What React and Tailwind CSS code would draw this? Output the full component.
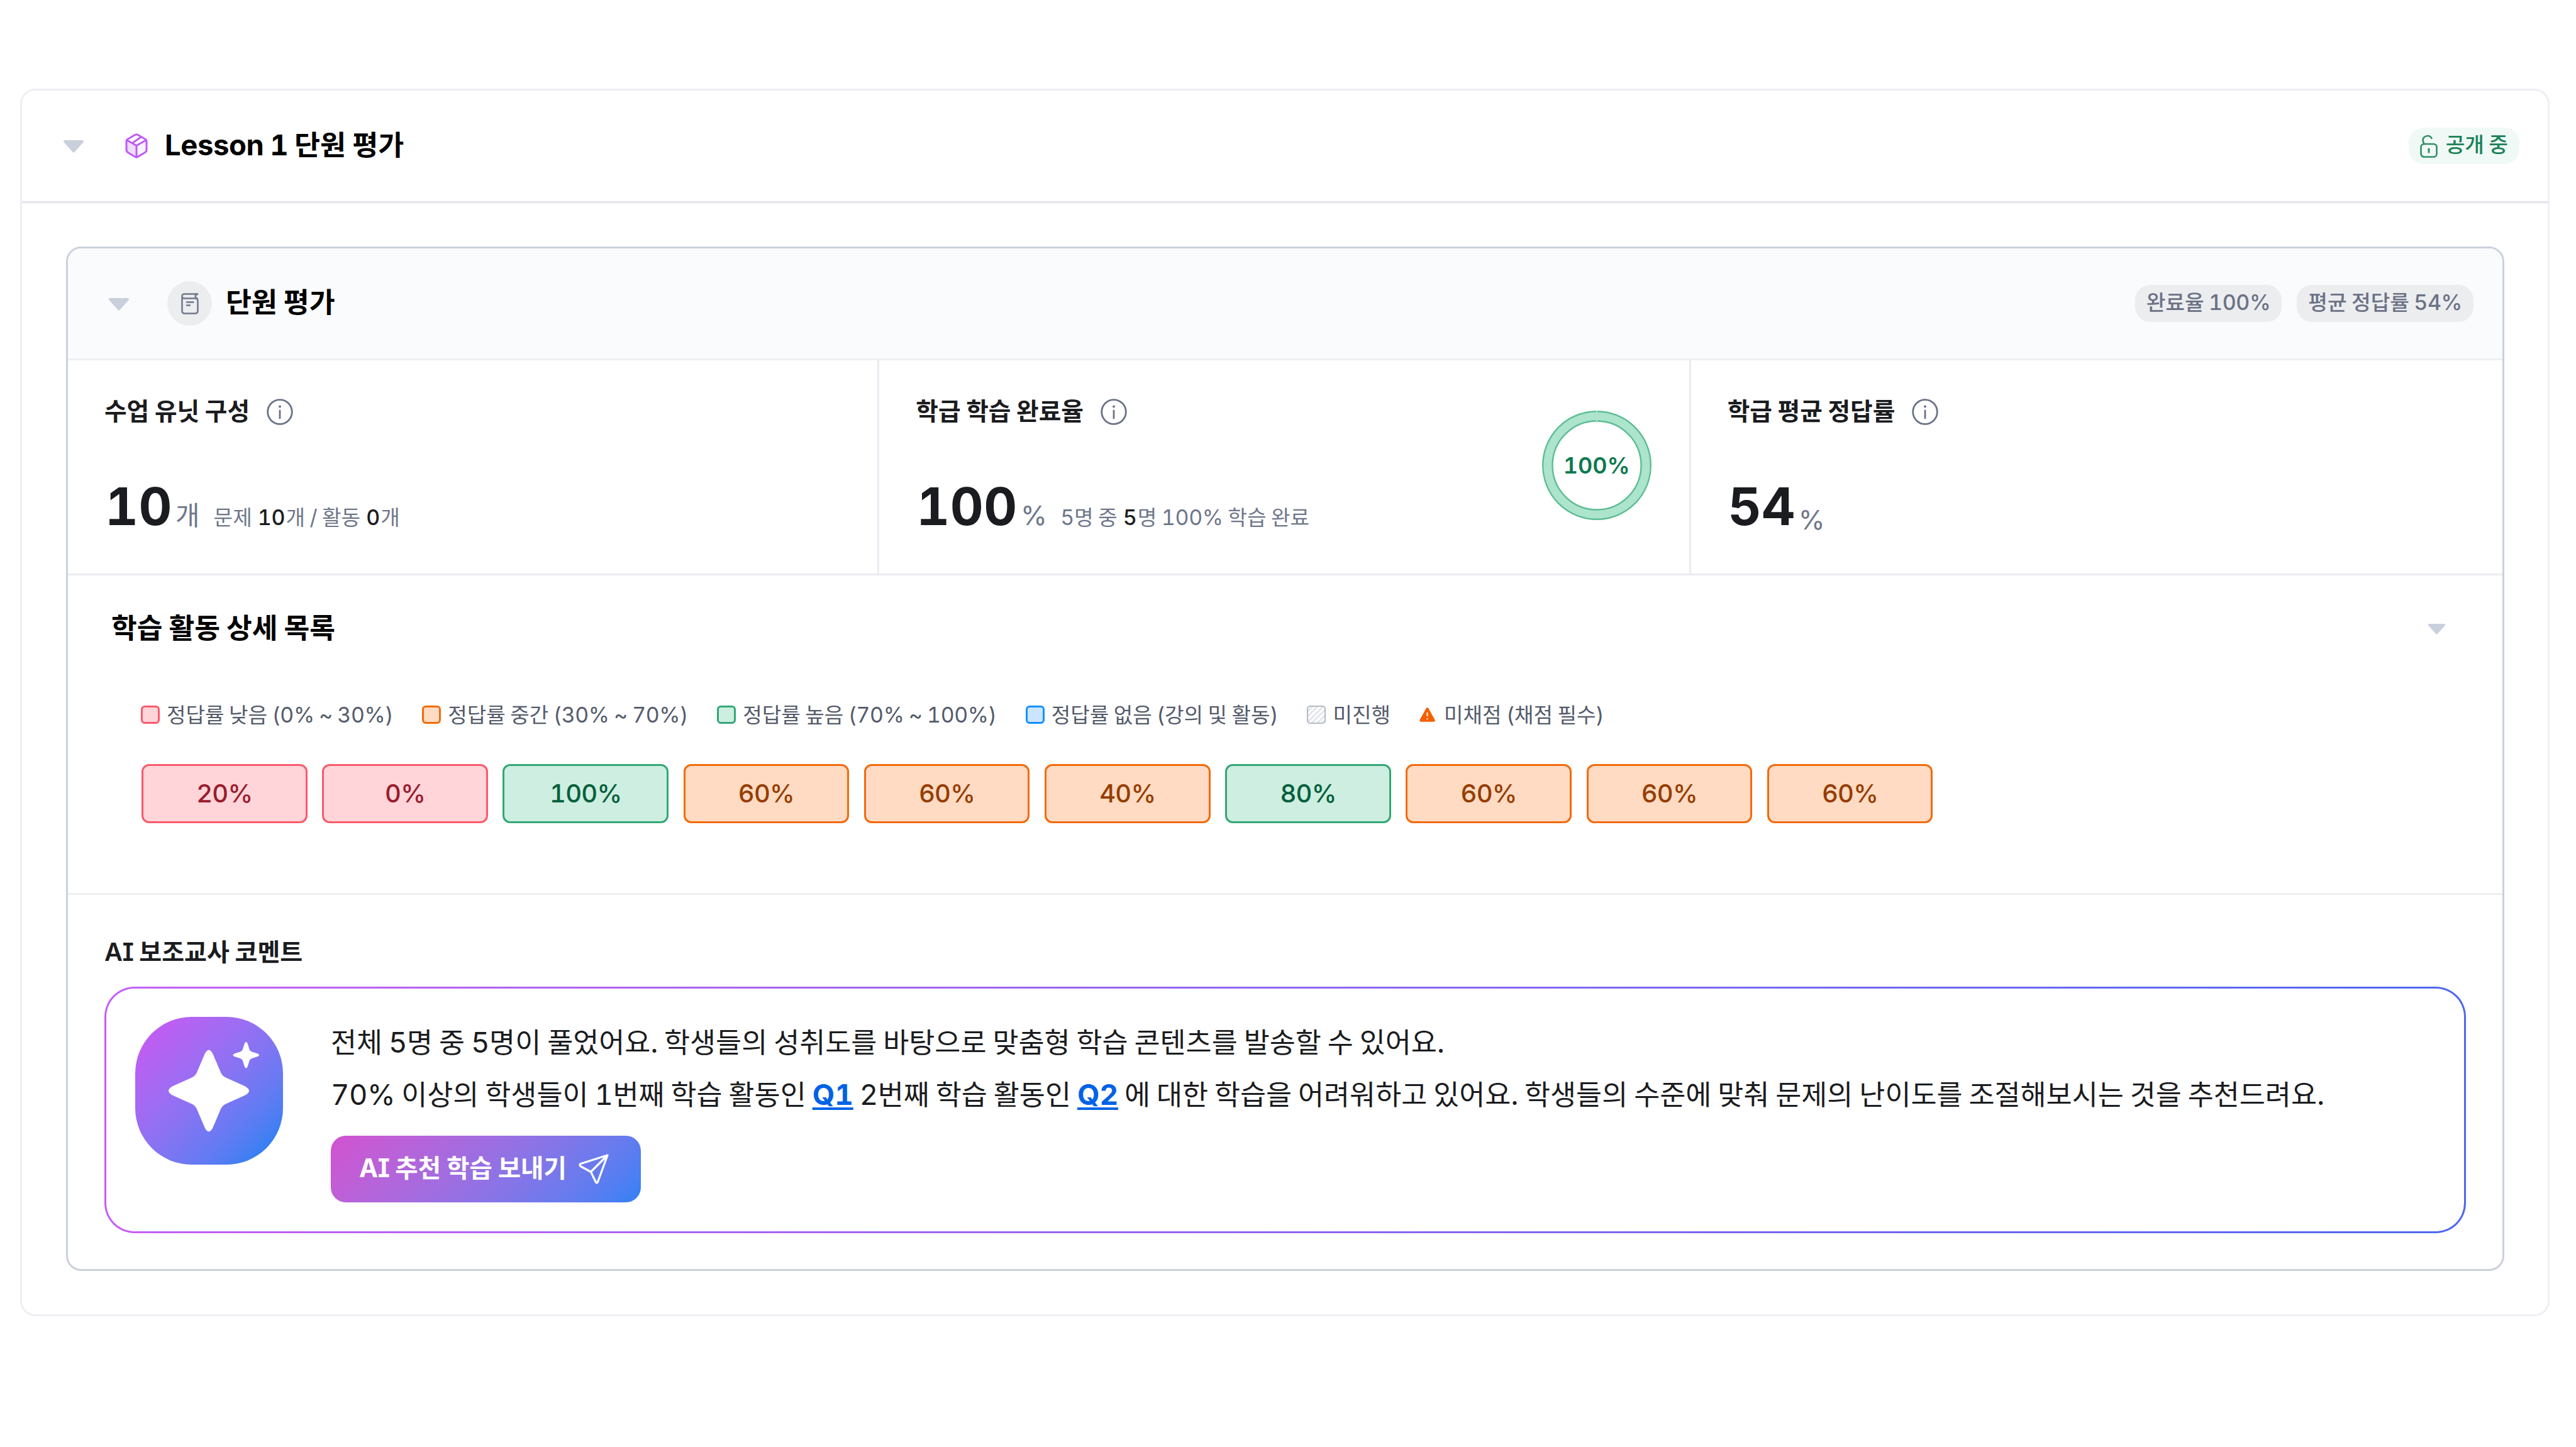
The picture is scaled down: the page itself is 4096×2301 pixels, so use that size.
import { Fragment } from "react";

const TONES = {
  low: "bg-[#ffd5da] border-[#fb5a6b] text-[#9b1c2c]",
  mid: "bg-[#ffdbc4] border-[#f36a0a] text-[#963d00]",
  high: "bg-[#cdeee0] border-[#33a776] text-[#065f3c]",
  none: "bg-[#cce5ff] border-[#1490ff]",
};

const LEGEND = [
  { tone: "low", label: "정답률 낮음 (0% ~ 30%)" },
  { tone: "mid", label: "정답률 중간 (30% ~ 70%)" },
  { tone: "high", label: "정답률 높음 (70% ~ 100%)" },
  { tone: "none", label: "정답률 없음 (강의 및 활동)" },
];

const SCORES = [20, 0, 100, 60, 60, 40, 80, 60, 60, 60];

function toneOf(score) {
  if (score < 30) return "low";
  if (score < 70) return "mid";
  return "high";
}

// Evens out the size and spacing of Hangul and the Latin text next to it
function Ko({ children }) {
  return (
    <span className="text-[0.97em] tracking-[-0.01em] [word-spacing:-0.04em]">
      {children.split(/([가-힣]+)/).map((part, i) =>
        i % 2 ? (
          <span key={i} className="text-[0.981em] tracking-normal">
            {part}
          </span>
        ) : (
          <Fragment key={i}>{part}</Fragment>
        )
      )}
    </span>
  );
}

function Caret({ className }) {
  return (
    <svg viewBox="0 0 34 20" className={className}>
      <path d="M3 2h28L17 17.5z" fill="#c9cfdb" stroke="#c9cfdb" strokeWidth="4" strokeLinejoin="round" />
    </svg>
  );
}

function CubeIcon() {
  return (
    <svg viewBox="0 0 36 40" className="h-[40px] w-[36px]" fill="none" stroke="#bf5af8" strokeWidth="3" strokeLinejoin="round" strokeLinecap="round">
      <path d="M3 11 18 19.5V38L5 30.5Q2 29 2 26V13z" fill="#efdcff" stroke="none" />
      <path d="M33 11 18 19.5V38l13-7.5Q34 29 34 26V13z" fill="#f9f2ff" stroke="none" />
      <path d="M16 2.3Q18 1.3 20 2.3L31.5 9Q34 10.5 34 13V26.5Q34 29 31.5 30.5L20 37.5Q18 38.5 16 37.5L4.5 30.5Q2 29 2 26.5V13Q2 10.5 4.5 9z" />
      <path d="M3 11 18 19.5 33 11M18 19.5V38M11.5 15.5 25 6" />
    </svg>
  );
}

function BookIcon() {
  return (
    <svg viewBox="0 0 28 34" className="h-[34px] w-[28px]" fill="none" stroke="#6f788c" strokeWidth="2.5" strokeLinejoin="round" strokeLinecap="round">
      <path d="M26 1.5H5.5Q1.5 1.5 1.5 5V28Q1.5 32.5 6 32.5H22Q26.5 32.5 26.5 28V12Q26.5 8.5 23 8.5H5Q1.5 8.5 1.5 5" />
      <path d="M26 1.5Q22.5 3 22.5 5T25.5 8.8M9 14.5H19.5M9 19.5H14" />
    </svg>
  );
}

function UnlockIcon() {
  return (
    <svg viewBox="0 0 28 37" className="h-[37px] w-[28px]" fill="none" stroke="#2f8f67" strokeWidth="2.6" strokeLinecap="round">
      <rect x="1.5" y="15" width="25" height="20.5" rx="5" />
      <path d="M6.5 15Q4.5 11.5 4.5 8.5A7.5 7.5 0 0 1 18.5 6" />
      <path d="M14 23.5V28" strokeWidth="3" />
      <circle cx="14" cy="23" r="1.6" fill="#2f8f67" stroke="none" />
    </svg>
  );
}

function InfoIcon() {
  return (
    <svg viewBox="0 0 42 42" className="h-[42px] w-[42px]" fill="none" stroke="#6a7286" strokeWidth="2.8" strokeLinecap="round">
      <circle cx="21" cy="21" r="19.3" />
      <path d="M21 19V31" />
      <circle cx="21" cy="12.5" r="2" fill="#6a7286" stroke="none" />
    </svg>
  );
}

function SendIcon() {
  return (
    <svg viewBox="0 0 48 48" className="h-[48px] w-[48px]" fill="none" stroke="#fff" strokeWidth="3.2" strokeLinejoin="round">
      <path d="M46 2 3.5 15.5Q0.8 17 3 19.5L19.5 28.5 27.5 45Q29 47 30.5 44.5zM19.5 28.5 46 2" />
    </svg>
  );
}

function SparkleLogo() {
  return (
    <div className="h-[235px] w-[235px] shrink-0 rounded-[90px] bg-linear-135 from-[#c758f2] from-5% to-[#3080f3] to-90%">
      <svg viewBox="0 0 235 235" className="h-full w-full" fill="#fff">
        <path d="M110.5 59Q117 46 123.5 59L135 86Q137.5 94 145 97L174 110Q188 117.5 174 125L145 138Q137.5 141 135 149L123.5 176Q117 189 110.5 176L99 149Q96.5 141 89 138L60 125Q46 117.5 60 110L89 97Q96.5 94 99 86z" />
        <path d="M174 42Q176.3 38 178.6 42L181.5 51.5Q182.5 54.5 185.5 55.5L195 58.5Q199 60.8 195 63L185.5 66Q182.5 67 181.5 70L178.6 79.5Q176.3 83.5 174 79.5L171 70Q170 67 167 66L157.5 63Q153.5 60.8 157.5 58.5L167 55.5Q170 54.5 171 51.5z" />
      </svg>
    </div>
  );
}

function Ring({ value }) {
  return (
    <div className="relative h-[174px] w-[174px]">
      <svg viewBox="0 0 174 174" className="h-full w-full" fill="none">
        <circle cx="87" cy="87" r="78.5" stroke="#ace4cc" strokeWidth="16" />
        <circle cx="87" cy="87" r="85.8" stroke="#5dbd95" strokeWidth="2.4" />
        <circle cx="87" cy="87" r="70.5" stroke="#5dbd95" strokeWidth="2.4" />
        <path d="M87 0V19" stroke="#ace4cc" strokeWidth="2" />
      </svg>
      <span className="absolute inset-0 flex items-center justify-center text-[36px] leading-none font-semibold text-[#0d7a4e]">
        {value}%
      </span>
    </div>
  );
}

function Strong({ children }) {
  return (
    <b className="mx-[1.5px] font-medium text-[#1b1c20]">
      <Ko>{children}</Ko>
    </b>
  );
}

function Stat({ title, value, unit, unitClass, note, children }) {
  return (
    <div className="flex justify-between border-r-[3px] border-[#ebecf1] pr-[60px] pl-[58px] last:border-r-0">
      <div className="flex flex-col pt-[60px]">
        <div className="flex h-[44px] items-center gap-[27px] text-[40.7px] font-semibold">
          <span className="pb-[2px]">
            <Ko>{title}</Ko>
          </span>
          <InfoIcon />
        </div>
        <div className="mt-[88px] flex h-[82px] items-baseline leading-[82px] text-[#6f778b]">
          <span className="ml-[1px] text-[82px] font-bold tracking-[0.5px] text-[#1b1c20]">{value}</span>
          <span className={`ml-[5px] text-[44px] ${unitClass || ""}`}>
            <Ko>{unit}</Ko>
          </span>
          {note && <span className="ml-[22px] text-[35px]">{note}</span>}
        </div>
      </div>
      {children}
    </div>
  );
}

function Badge({ children }) {
  return (
    <span className="flex h-[59px] items-center rounded-[24px] bg-[#ecedef] px-[18px] pb-[2px] text-[35px] font-medium text-[#6b7286]">
      <Ko>{children}</Ko>
    </span>
  );
}

function QuestionLink({ children }) {
  return (
    <a href="#" className="text-[0.975em] font-bold text-[#0062e6] underline decoration-[4px] underline-offset-[4px] [text-decoration-skip-ink:none]">
      {children}
    </a>
  );
}

export default function App() {
  return (
    <div className="h-[2301px] w-[4096px] overflow-hidden bg-white pt-[141px] pr-[42px] pl-[32px] font-[Inter,'Noto_Sans_CJK_KR',sans-serif] leading-none whitespace-nowrap text-[#1b1c20] [font-feature-settings:'tnum','cv08']">
      <section className="h-[1952px] rounded-[24px] border-[3px] border-[#eeeff4]">
        <header className="flex h-[179px] items-center border-b-[3px] border-[#e3e5ed] pr-[45px] pl-[65px]">
          <Caret className="mt-[2px] h-[20px] w-[34px]" />
          <div className="ml-[65px]">
            <CubeIcon />
          </div>
          <h1 className="ml-[27px] pb-[4px] text-[46.9px] font-bold text-black">
            <Ko>Lesson 1 단원 평가</Ko>
          </h1>
          <span className="ml-auto flex h-[58px] items-center gap-[13px] rounded-[24px] bg-[#f0f9f6] px-[18px] text-[35px] font-medium text-[#1b8257]">
            <UnlockIcon />
            <span className="pb-[4px]">
              <Ko>공개 중</Ko>
            </span>
          </span>
        </header>

        <div className="pt-[69px] pr-[69px] pl-[70px]">
          <article className="h-[1629px] overflow-hidden rounded-[24px] border-[3px] border-[#cbd0dc]">
            <header className="flex h-[178px] items-center border-b-[3px] border-[#eeeff3] bg-[#fafbfd] pr-[46px] pl-[64px]">
              <Caret className="mt-[2px] h-[20px] w-[34px]" />
              <span className="ml-[60px] flex h-[71px] w-[71px] items-center justify-center rounded-full bg-[#ecedef]">
                <BookIcon />
              </span>
              <h2 className="ml-[22px] pb-[4px] text-[46.8px] font-bold text-black">
                <Ko>단원 평가</Ko>
              </h2>
              <div className="ml-auto flex gap-[24px]">
                <Badge>완료율 100%</Badge>
                <Badge>평균 정답률 54%</Badge>
              </div>
            </header>

            <div className="grid h-[342px] grid-cols-3 border-b-[3px] border-[#ebecf1]">
              <Stat
                title="수업 유닛 구성"
                value="10"
                unit="개"
                note={
                  <>
                    <Ko>문제 </Ko>
                    <Strong>10</Strong>
                    <Ko>개 / 활동 </Ko>
                    <Strong>0</Strong>
                    <Ko>개</Ko>
                  </>
                }
              />
              <Stat
                title="학급 학습 완료율"
                value="100"
                unit="%"
                note={
                  <>
                    <Ko>5명 중 </Ko>
                    <Strong>5</Strong>
                    <Ko>명 100% 학습 완료</Ko>
                  </>
                }
              >
                <div className="pt-[80px]">
                  <Ring value={100} />
                </div>
              </Stat>
              <Stat title="학급 평균 정답률" value="54" unit="%" unitClass="translate-y-[7px]" />
            </div>

            <div className="h-[508px] border-b-[3px] border-[#eeeff3] pt-[60px]">
              <div className="flex h-[50px] items-center justify-between pr-[90px] pl-[69px]">
                <h3 className="pb-[3px] text-[46.6px] font-bold text-black">
                  <Ko>학습 활동 상세 목록</Ko>
                </h3>
                <Caret className="h-[17px] w-[29px]" />
              </div>
              <div className="mt-[92px] flex h-[40px] items-center gap-[46px] pl-[116px] text-[34.9px] text-[#545b6b]">
                {LEGEND.map((item) => (
                  <span key={item.tone} className="flex items-center gap-[11px]">
                    <i className={`h-[29px] w-[30px] rounded-[6px] border-[3px] ${TONES[item.tone]}`} />
                    <Ko>{item.label}</Ko>
                  </span>
                ))}
                <span className="flex items-center gap-[11px]">
                  <i className="h-[29px] w-[30px] rounded-[5px] border-2 border-[#b4bac8] bg-[repeating-linear-gradient(135deg,#fff_0_3px,#e3e5ec_3px_6px)]" />
                  <Ko>미진행</Ko>
                </span>
                <span className="flex items-center gap-[14px]">
                  <svg viewBox="0 0 25 23" className="h-[23px] w-[25px]">
                    <path d="M12.5 2.5 22.5 20.5H2.5z" fill="#f55f00" stroke="#f55f00" strokeWidth="4.5" strokeLinejoin="round" />
                    <path d="M12.5 8V14M12.5 17V19" stroke="#ffe3d0" strokeWidth="2.4" />
                  </svg>
                  <Ko>미채점 (채점 필수)</Ko>
                </span>
              </div>
              <div className="mt-[58px] flex gap-[23.5px] pl-[117px]">
                {SCORES.map((score, index) => (
                  <div
                    key={index}
                    className={`flex h-[94px] w-[263.7px] items-center justify-center rounded-[12px] border-[3px] text-[40px] font-medium tracking-[-0.02em] ${TONES[toneOf(score)]}`}
                  >
                    {score}%
                  </div>
                ))}
              </div>
            </div>

            <div className="pt-[68px] pr-[58px] pl-[58px]">
              <h4 className="flex h-[46px] items-center text-[41px] font-semibold">
                <Ko>AI 보조교사 코멘트</Ko>
              </h4>
              <div className="mt-[32px] rounded-[48px] bg-linear-to-r from-[#c55cf8] to-[#4d66ee] p-[3px]">
                <div className="flex h-[386px] rounded-[45px] bg-white pt-[45px] pl-[46px]">
                  <SparkleLogo />
                  <div className="ml-[76px]">
                    <div className="text-[46.9px] leading-[81.5px]">
                      <p>
                        <Ko>전체 5명 중 5명이 풀었어요. 학생들의 성취도를 바탕으로 맞춤형 학습 콘텐츠를 발송할 수 있어요.</Ko>
                      </p>
                      <p>
                        <Ko>70% 이상의 학생들이 1번째 학습 활동인 </Ko>
                        <QuestionLink>Q1</QuestionLink>
                        <Ko> 2번째 학습 활동인 </Ko>
                        <QuestionLink>Q2</QuestionLink>
                        <Ko> 에 대한 학습을 어려워하고 있어요. 학생들의 수준에 맞춰 문제의 난이도를 조절해보시는 것을 추천드려요.</Ko>
                      </p>
                    </div>
                    <button className="mt-[24px] flex h-[106px] w-[493px] items-center gap-[19px] rounded-[24px] bg-linear-135 from-[#d351d0] to-[#2f81f6] pl-[45px] text-[41.6px] font-bold text-white">
                      <span className="pb-[2px]">
                        <Ko>AI 추천 학습 보내기</Ko>
                      </span>
                      <SendIcon />
                    </button>
                  </div>
                </div>
              </div>
            </div>
          </article>
        </div>
      </section>
    </div>
  );
}
